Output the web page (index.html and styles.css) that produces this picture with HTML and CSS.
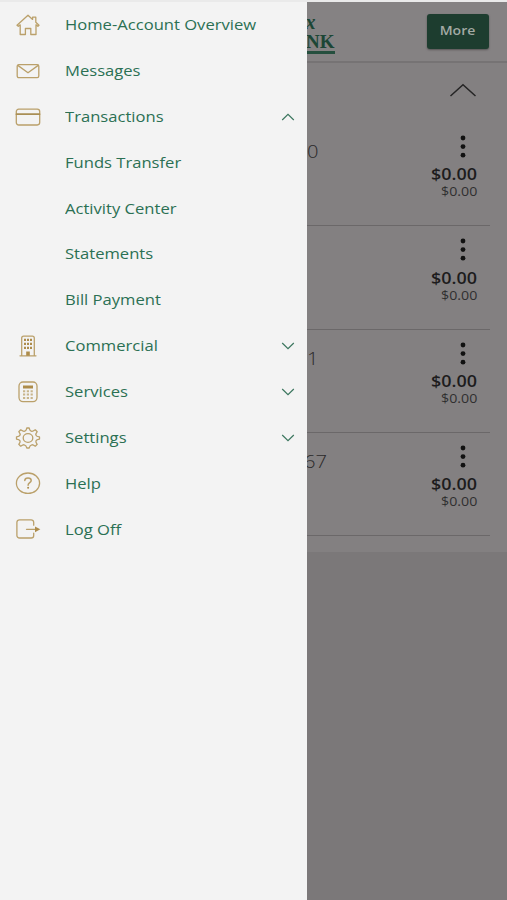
FILE: index.html
```html
<!DOCTYPE html>
<html lang="en">
<head>
<meta charset="utf-8">
<title>Account Overview</title>
<link rel="stylesheet" href="styles.css">
</head>
<body>
<div class="screen">
  <main class="page">
    <header class="topbar">
      <div class="logo"><span class="logo-top">x</span><span class="logo-bottom">BANK</span></div>
      <button class="more"><span class="wide">More</span></button>
    </header>
    <section class="accounts">
      <div class="group"><svg class="group-arrow" viewBox="0 0 28 14"><path d="M1.5 13 14 1.8 26.5 13"/></svg></div>
      <article class="account">
        <span class="number">0</span>
        <div class="amounts"><svg class="dots" viewBox="0 0 6 24"><circle cx="3" cy="3" r="2.4"/><circle cx="3" cy="11.6" r="2.4"/><circle cx="3" cy="20.2" r="2.4"/></svg><b class="balance">$0.00</b><span class="available">$0.00</span></div>
      </article>
      <article class="account">
        <span class="number"></span>
        <div class="amounts"><svg class="dots" viewBox="0 0 6 24"><circle cx="3" cy="3" r="2.4"/><circle cx="3" cy="11.6" r="2.4"/><circle cx="3" cy="20.2" r="2.4"/></svg><b class="balance">$0.00</b><span class="available">$0.00</span></div>
      </article>
      <article class="account">
        <span class="number">1</span>
        <div class="amounts"><svg class="dots" viewBox="0 0 6 24"><circle cx="3" cy="3" r="2.4"/><circle cx="3" cy="11.6" r="2.4"/><circle cx="3" cy="20.2" r="2.4"/></svg><b class="balance">$0.00</b><span class="available">$0.00</span></div>
      </article>
      <article class="account">
        <span class="number">67</span>
        <div class="amounts"><svg class="dots" viewBox="0 0 6 24"><circle cx="3" cy="3" r="2.4"/><circle cx="3" cy="11.6" r="2.4"/><circle cx="3" cy="20.2" r="2.4"/></svg><b class="balance">$0.00</b><span class="available">$0.00</span></div>
      </article>
    </section>
  </main>
  <nav class="drawer">
    <a class="item"><svg class="icon" viewBox="0 0 26 24"><path d="M2 12.2 13 2.2l4.6 4.2V4.2h3.2v5L24 12.2l-1.1 1.1-1.9-1.5v9.7h-5.2v-6h-5.4v6H5.2v-9.7l-1.9 1.5z"/></svg><span class="label">Home-Account Overview</span></a>
    <a class="item"><svg class="icon" viewBox="0 0 26 24"><rect x="2.2" y="5.7" width="21.6" height="13" rx="1.6"/><path d="m2.8 6.4 10.2 7.4L23.2 6.4"/></svg><span class="label">Messages</span></a>
    <a class="item"><svg class="icon" viewBox="0 0 26 24"><rect x="1.3" y="4.2" width="23.4" height="15.8" rx="2.4"/><path class="band" d="M1.5 9.2h23"/></svg><span class="label">Transactions</span><svg class="arrow" viewBox="0 0 14 8"><path d="M1.2 7 7 1.4 12.8 7"/></svg></a>
    <a class="item sub"><span class="label">Funds Transfer</span></a>
    <a class="item sub"><span class="label">Activity Center</span></a>
    <a class="item sub"><span class="label">Statements</span></a>
    <a class="item sub"><span class="label">Bill Payment</span></a>
    <a class="item"><svg class="icon" viewBox="0 0 26 24"><path d="M5 21.8h16M6.7 21.5V4.2a2 2 0 0 1 2-2h8.6a2 2 0 0 1 2 2v17.3"/><path class="solid" d="M9 4.7h2v2.4H9zM12 4.7h2v2.4h-2zM15 4.7h2v2.4h-2zM9 8.7h2v2.4H9zM12 8.7h2v2.4h-2zM15 8.7h2v2.4h-2zM9 12.7h2v2.4H9zM12 12.7h2v2.4h-2zM15 12.7h2v2.4h-2zM11.2 17.5h3.6v4.3h-3.6z"/></svg><span class="label">Commercial</span><svg class="arrow" viewBox="0 0 14 8"><path d="M1.2 1 7 6.6 12.8 1"/></svg></a>
    <a class="item"><svg class="icon" viewBox="0 0 26 24"><rect x="4" y="2" width="18" height="19.6" rx="4"/><path class="solid" d="M8 5.5h10v3H8z"/><path class="keys" d="M8 11.2h10M8 14.6h10M8 18h10"/></svg><span class="label">Services</span><svg class="arrow" viewBox="0 0 14 8"><path d="M1.2 1 7 6.6 12.8 1"/></svg></a>
    <a class="item"><svg class="icon" viewBox="0 0 26 24"><path d="M11.8 2h2.4q.5 3 2.6 3.3 1 .2 3.5-1.5l1.9 1.9q-1.7 2.3-1.3 3.4.6 1.6 3.6 1.8v2.2q-3 .3-3.6 1.9-.4 1 1.3 3.3l-1.9 1.9q-2.5-1.7-3.5-1.4-2.1.5-2.6 3.2h-2.4q-.5-2.7-2.6-3.2-1-.3-3.5 1.4l-1.9-1.9q1.7-2.3 1.3-3.3-.6-1.6-3.6-1.9v-2.2q3-.2 3.6-1.8.4-1.1-1.3-3.4l1.9-1.9q2.5 1.7 3.5 1.5 2.1-.3 2.6-3.3z"/><ellipse cx="13" cy="12" rx="4.8" ry="4.3"/></svg><span class="label">Settings</span><svg class="arrow" viewBox="0 0 14 8"><path d="M1.2 1 7 6.6 12.8 1"/></svg></a>
    <a class="item"><svg class="icon" viewBox="0 0 26 24"><ellipse cx="13" cy="12.2" rx="11.6" ry="10.2"/><path class="question" d="M9.8 9.6c0-1.8 1.4-2.7 3.2-2.7s3.2.9 3.2 2.5c0 2.4-3.1 2.2-3.1 4.8"/><circle class="solid" cx="13.1" cy="16.8" r="1"/></svg><span class="label">Help</span></a>
    <a class="item"><svg class="icon" viewBox="0 0 26 24"><path d="M18.7 8.2V5.4a2.6 2.6 0 0 0-2.6-2.6H4.5a2.6 2.6 0 0 0-2.6 2.6v13a2.6 2.6 0 0 0 2.6 2.6h11.6a2.6 2.6 0 0 0 2.6-2.6v-2.2M11.5 12.3H21"/><path class="solid" d="m20 9.4 5.3 2.9-5.3 2.9z"/></svg><span class="label">Log Off</span></a>
  </nav>
</div>
</body>
</html>
```
FILE: styles.css
```css
* { box-sizing: border-box; }
body { margin: 0; font-family: "Open Sans", "Noto Sans", sans-serif; }
svg { display: block; fill: none; flex: none; }

.screen { position: relative; height: 900px; overflow: hidden; background: #7b7879; border-top: 2px solid #eaeaea; }

.topbar { height: 61px; display: flex; justify-content: space-between; padding: 12px 18px 0 254px; background: #858283; border-bottom: 2px solid #767374; }
.logo { width: 80.5px; height: 40px; display: flex; flex-direction: column; align-items: flex-end; border-bottom: 3px solid #254f3e; font-family: "Liberation Serif", serif; font-weight: 700; color: #1c4635; }
.logo-top { font-size: 20px; line-height: 17px; font-style: italic; margin-right: 19px; }
.logo-bottom { font-size: 19px; line-height: 21px; }
.more { width: 62px; height: 35px; padding: 0 0 3px; border: 0; border-radius: 3px; background: #1d3d2f; color: #a3aaa4; font: 600 13px "Open Sans", sans-serif; box-shadow: 0 1px 2px #575556; }
.wide { display: inline-block; transform: scaleX(1.08); }

.accounts { height: 489px; padding: 0 17px 0 18px; background: #838081; }
.group { height: 60.2px; padding: 20px 13px 0; display: flex; justify-content: flex-end; }
.group-arrow { width: 28px; height: 14px; stroke: #252425; stroke-width: 1.5; }
.account { height: 103.2px; display: flex; justify-content: space-between; padding: 12px 13px 0 289px; border-bottom: 1.5px solid #6b6869; }
.number { font-size: 17.5px; line-height: 24px; padding-top: 4px; font-weight: 300; color: #2b292a; transform: scaleX(1.15); transform-origin: left; height: 28px; }
.account:last-child .number { margin-left: -3px; }
.amounts { display: flex; flex-direction: column; align-items: flex-end; color: #1d1c1d; }
.dots { width: 6px; height: 24px; margin-right: 11px; fill: #111; }
.balance { font-size: 16px; line-height: 20px; font-weight: 600; margin-top: 5.2px; transform: scaleX(1.12); transform-origin: right; }
.available { font-size: 12.7px; line-height: 15px; color: #302f30; transform: scaleX(1.12); transform-origin: right; }

.drawer { position: absolute; top: 0; left: 0; width: 307px; height: 898px; background: #f3f3f3; }
.item { height: 45.85px; display: flex; align-items: center; padding: 0 12px 0 15.4px; color: #2b7053; }
.icon { width: 26px; height: 24px; margin-right: 24px; stroke: #baa06a; stroke-width: 1.3; stroke-linejoin: round; stroke-linecap: round; }
.solid { fill: #ad8c4b; stroke: none; }
.band { stroke: #a98f55; stroke-width: 1.8; }
.keys { stroke-width: 2; stroke-dasharray: 2.2 1.6; stroke-linecap: butt; opacity: .75; }
.question { stroke-width: 1.5; }
.sub { padding-left: 65.4px; }
.label { font-size: 15.3px; line-height: 22px; padding-bottom: 1.4px; white-space: nowrap; transform: scaleX(1.085); transform-origin: left; }
.arrow { width: 14px; height: 8px; margin-left: auto; stroke: #3b765e; stroke-width: 1.2; }
```
